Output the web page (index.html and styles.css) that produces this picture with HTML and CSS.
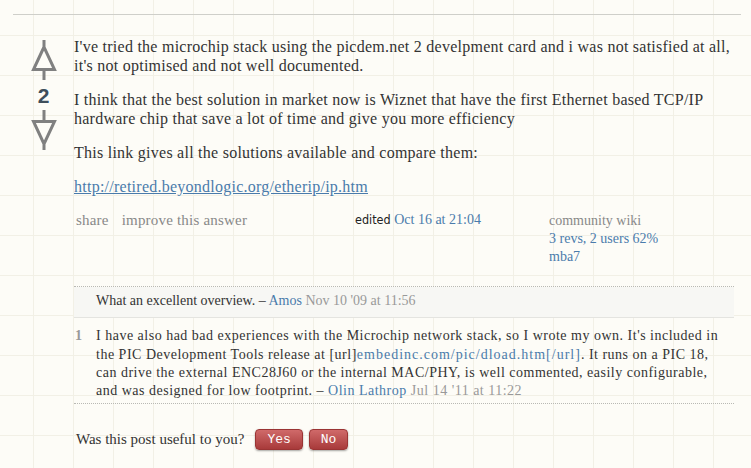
FILE: index.html
```html
<!DOCTYPE html>
<html>
<head>
<meta charset="utf-8">
<link rel="stylesheet" href="styles.css">
</head>
<body>
<div class="page">
  <div class="answer">
    <div class="votecell">
      <svg class="arrow" width="28" height="42" viewBox="0 0 28 42">
        <path d="M14 0 V7 M14 7 L3.5 29.5 H24.5 Z M14 29.5 V40" fill="none" stroke="#808080" stroke-width="3"/>
      </svg>
      <div class="count">2</div>
      <svg class="arrow" width="28" height="42" viewBox="0 0 28 42">
        <path d="M14 0 V11.5 M3.5 11.5 H24.5 L14 34 Z M14 34 V40" fill="none" stroke="#808080" stroke-width="3"/>
      </svg>
    </div>
    <div class="postcell">
      <div class="post-text">
        <p>I've tried the microchip stack using the picdem.net 2 develpment card and i was not satisfied at all, it's not optimised and not well documented.</p>
        <p>I think that the best solution in market now is Wiznet that have the first Ethernet based TCP/IP hardware chip that save a lot of time and give you more efficiency</p>
        <p>This link gives all the solutions available and compare them:</p>
        <p><a href="#">http://retired.beyondlogic.org/etherip/ip.htm</a></p>
      </div>
      <div class="meta">
        <div class="menu"><span>share</span><span>improve this answer</span></div>
        <div class="edited"><span class="ed">edited</span> <a href="#" class="plain">Oct 16 at 21:04</a></div>
        <div class="wiki">
          <div class="grey">community wiki</div>
          <div><a href="#" class="plain">3 revs, 2 users 62%</a></div>
          <div><a href="#" class="plain">mba7</a></div>
        </div>
      </div>
      <div class="comments">
        <div class="comment first">
          <div class="cscore"></div>
          <div class="ctext">What an excellent overview. – <a href="#" class="plain">Amos</a> <span class="cdate">Nov 10 '09 at 11:56</span></div>
        </div>
        <div class="comment second">
          <div class="cscore">1</div>
          <div class="ctext">I have also had bad experiences with the Microchip network stack, so I wrote my own. It's included in the PIC Development Tools release at [url]<a href="#" class="plain url">embedinc.com/pic/dload.htm[/url]</a>. It runs on a PIC 18, can drive the external ENC28J60 or the internal MAC/PHY, is well commented, easily configurable, and was designed for low footprint. – <a href="#" class="plain">Olin Lathrop</a> <span class="cdate">Jul 14 '11 at 11:22</span></div>
        </div>
      </div>
      <div class="useful">
        <span>Was this post useful to you?</span>
        <button class="btn">Yes</button>
        <button class="btn">No</button>
      </div>
    </div>
  </div>
</div>
</body>
</html>
```
FILE: styles.css
```css
html, body {
  margin: 0;
  padding: 0;
}
body {
  background-color: #fdfcf7;
  background-image:
    linear-gradient(to right, #f2f0e6 1px, transparent 1px),
    linear-gradient(to bottom, #f2f0e6 1px, transparent 1px);
  background-size: 40px 40px;
  background-position: 33px 35px;
  font-family: "Liberation Serif", "DejaVu Serif", serif;
  color: #333;
  width: 751px;
  height: 468px;
  overflow: hidden;
}
.page {
  padding: 14px 10px 0 13px;
}
.answer {
  border-top: 1px solid #cfcfca;
  display: flex;
  width: 728px;
  padding-top: 25px;
}
.votecell {
  width: 61px;
  flex: none;
  display: flex;
  flex-direction: column;
  align-items: center;
}
.arrow {
  display: block;
}
.count {
  font-family: "Liberation Sans", Arial, sans-serif;
  font-weight: bold;
  font-size: 21px;
  line-height: 28px;
  color: #3e4e5b;
}
.postcell {
  width: 660px;
}
.post-text {
  font-size: 16px;
  letter-spacing: 0.25px;
  line-height: 19px;
}
.post-text p {
  margin: 0 0 15px 0;
}
.post-text p:first-child {
  margin-top: -3px;
}
a {
  color: #4a7bab;
}
a.plain {
  text-decoration: none;
}
.meta {
  display: grid;
  grid-template-columns: 281px 194px 1fr;
  font-size: 14px;
  line-height: 18px;
  margin-top: 2px;
}
.menu {
  color: #888;
  padding-left: 2px;
  display: flex;
  gap: 13px;
  font-size: 15px;
  letter-spacing: 0.2px;
}
.edited .ed {
  font-family: "DejaVu Sans Condensed", "Liberation Sans", sans-serif;
  font-size: 12.5px;
  color: #222;
}
.wiki {
  padding-top: 1px;
}
.grey {
  color: #888;
}
.comments {
  margin-top: 20px;
  width: 660px;
  border-top: 1px dotted #b9b9b4;
  border-bottom: 1px dotted #b9b9b4;
  font-size: 14px;
  line-height: 18.3px;
}
.comment {
  display: flex;
}
.comment.first {
  background: #f7f7f4;
  border-bottom: 1px solid #e4e4e0;
  padding: 5px 0 7px 0;
}
.comment.second {
  padding: 9px 0 3px 0;
  letter-spacing: 0.5px;
}
.cscore {
  width: 21px;
  flex: none;
  color: #999;
  padding-left: 1px;
  font-weight: bold;
  letter-spacing: 0;
}
.ctext {
  flex: 1;
  padding-right: 10px;
}
.url {
  letter-spacing: 1px;
}
.cdate {
  color: #999;
}
.useful {
  margin-top: 25px;
  padding-left: 2px;
  display: flex;
  align-items: center;
  font-size: 15px;
}
.useful span {
  margin-right: 11px;
}
.btn {
  font-family: "Liberation Mono", "Courier New", monospace;
  font-size: 13px;
  color: #fff;
  background: linear-gradient(#d06a6a, #a83a3a);
  border: 1px solid #9a3434;
  border-radius: 4px;
  box-shadow: 0 1px 2px rgba(0,0,0,0.35);
  height: 21px;
  padding: 0 11px;
  margin-right: 6px;
  line-height: 19px;
}
```
